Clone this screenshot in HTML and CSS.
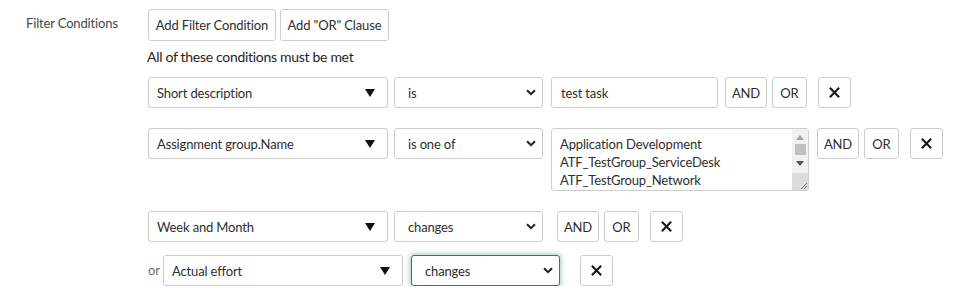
FILE: index.html
```html
<!DOCTYPE html>
<html>
<head>
<meta charset="utf-8">
<link rel="stylesheet" href="styles.css">
</head>
<body>
<div class="form-row">
  <div class="label">Filter Conditions</div>
  <div class="content">
    <div class="toolbar">
      <button class="btn">Add Filter Condition</button>
      <button class="btn">Add "OR" Clause</button>
    </div>
    <div class="note">All of these conditions must be met</div>

    <div class="cond">
      <div class="field"><span>Short description</span><svg class="tri" viewBox="0 0 10 8"><path d="M0 0H10L5 8Z"/></svg></div>
      <div class="op"><span>is</span><svg class="chev" viewBox="0 0 10 7"><path d="M1 1.2L5 5.2L9 1.2"/></svg></div>
      <div class="input gap8">test task</div>
      <button class="btn sm gap7">AND</button>
      <button class="btn sm gap5">OR</button>
      <button class="btn x gap11"><svg viewBox="0 0 14 14"><path d="M2 2L12 12M12 2L2 12"/></svg></button>
    </div>

    <div class="cond">
      <div class="field"><span>Assignment group.Name</span><svg class="tri" viewBox="0 0 10 8"><path d="M0 0H10L5 8Z"/></svg></div>
      <div class="op"><span>is one of</span><svg class="chev" viewBox="0 0 10 7"><path d="M1 1.2L5 5.2L9 1.2"/></svg></div>
      <div class="multi gap8">
        <div class="opts">
          <div>Application Development</div>
          <div>ATF_TestGroup_ServiceDesk</div>
          <div>ATF_TestGroup_Network</div>
        </div>
        <div class="sbar">
          <svg class="arr" viewBox="0 0 8 5"><path d="M0 5L4 0L8 5Z"/></svg>
          <div class="thumb"></div>
          <svg class="arr dn" viewBox="0 0 8 5"><path d="M0 0L4 5L8 0Z"/></svg>
          <div class="grip"><svg viewBox="0 0 10 10"><path d="M9 3L3 9M9 6L6 9"/></svg></div>
        </div>
      </div>
      <button class="btn sm gap8">AND</button>
      <button class="btn sm gap5">OR</button>
      <button class="btn x gap11"><svg viewBox="0 0 14 14"><path d="M2 2L12 12M12 2L2 12"/></svg></button>
    </div>

    <div class="cond">
      <div class="field"><span>Week and Month</span><svg class="tri" viewBox="0 0 10 8"><path d="M0 0H10L5 8Z"/></svg></div>
      <div class="op"><span>changes</span><svg class="chev" viewBox="0 0 10 7"><path d="M1 1.2L5 5.2L9 1.2"/></svg></div>
      <button class="btn sm gap14">AND</button>
      <button class="btn sm gap5">OR</button>
      <button class="btn x gap11"><svg viewBox="0 0 14 14"><path d="M2 2L12 12M12 2L2 12"/></svg></button>
    </div>

    <div class="cond or-row">
      <span class="or">or</span>
      <div class="field"><span>Actual effort</span><svg class="tri" viewBox="0 0 10 8"><path d="M0 0H10L5 8Z"/></svg></div>
      <div class="op focus gap8"><span>changes</span><svg class="chev" viewBox="0 0 10 7"><path d="M1 1.2L5 5.2L9 1.2"/></svg></div>
      <button class="btn x gap20"><svg viewBox="0 0 14 14"><path d="M2 2L12 12M12 2L2 12"/></svg></button>
    </div>
  </div>
</div>
</body>
</html>
```

FILE: styles.css
```css
* { box-sizing: border-box; }
body {
  margin: 0;
  background: #fff;
  font-family: Lato, "Open Sans", sans-serif;
  color: #2e2e2e;
  font-size: 13px;
  letter-spacing: -0.15px;
}
.form-row {
  display: flex;
  padding-top: 9px;
}
.label {
  width: 148px;
  padding-left: 26px;
  padding-top: 6px;
  color: #474747;
  font-size: 13px;
}
.content { display: flex; flex-direction: column; }
.toolbar { display: flex; gap: 4px; }
.btn {
  font-family: inherit;
  font-size: 13px;
  letter-spacing: -0.15px;
  color: #2e2e2e;
  background: #fff;
  border: 1px solid #cdcdcd;
  border-radius: 3px;
  height: 32px;
  padding: 0;
  display: flex;
  align-items: center;
  justify-content: center;
  white-space: nowrap;
}
.toolbar .btn:first-child { width: 128px; }
.toolbar .btn:last-child { width: 109px; }
.note {
  margin-top: 7px;
  font-size: 14px;
  color: #1e1e1e;
  height: 21px;
  margin-left: -1px;
  letter-spacing: -0.3px;
}
.cond {
  display: flex;
  align-items: flex-start;
  margin-top: 8px;
}
.cond + .cond { margin-top: 20px; }
.cond.or-row { margin-top: 13px; }
.field, .op, .input {
  height: 31px;
  border: 1px solid #cdcdcd;
  border-radius: 3px;
  display: flex;
  align-items: center;
  font-size: 13px;
  color: #2e2e2e;
  background: #fff;
}
.field {
  width: 240px;
  padding: 0 12px 0 8px;
  justify-content: space-between;
}
.tri { width: 10px; height: 8px; fill: #111; }
.op {
  width: 149px;
  margin-left: 6px;
  padding: 0 6px 0 13px;
  justify-content: space-between;
}
.chev { width: 10px; height: 7px; fill: none; stroke: #222; stroke-width: 2; }
.op.focus {
  border-color: #2a7e6f;
  box-shadow: 0 0 5px 1px rgba(42, 140, 120, 0.45);
}
.input { width: 167px; padding-left: 9px; }
.btn.sm { width: 42px; height: 31px; }
.btn.sm + .btn.sm { width: 35px; }
.btn.x { width: 33px; height: 31px; }
.btn.x svg { width: 13px; height: 13px; stroke: #1a1a1a; stroke-width: 2.3; fill: none; }
.gap5 { margin-left: 5px; }
.gap7 { margin-left: 7px; }
.gap8 { margin-left: 8px; }
.gap11 { margin-left: 11px; }
.gap14 { margin-left: 14px; }
.gap20 { margin-left: 20px; }
.multi {
  width: 258px;
  height: 63px;
  border: 1px solid #cdcdcd;
  border-radius: 3px;
  display: flex;
  overflow: hidden;
}
.opts {
  flex: 1;
  padding: 6px 0 0 8px;
  line-height: 18px;
  font-size: 13px;
  color: #2e2e2e;
}
.sbar {
  width: 16px;
  background: #f1f1f1;
  display: flex;
  flex-direction: column;
  align-items: center;
}
.arr { width: 8px; height: 5px; fill: #a3a3a3; margin-top: 6px; }
.arr.dn { fill: #505050; margin-top: 6px; }
.thumb { width: 11px; height: 11px; background: #c1c1c1; margin-top: 4px; }
.grip {
  margin-top: auto;
  width: 16px;
  height: 17px;
  background: #dcdcdc;
  display: flex;
  align-items: flex-end;
  justify-content: flex-end;
}
.grip svg { width: 10px; height: 10px; stroke: #777; stroke-width: 1; fill: none; }
.or { width: 15px; color: #557777; font-size: 13px; line-height: 31px; }
```
